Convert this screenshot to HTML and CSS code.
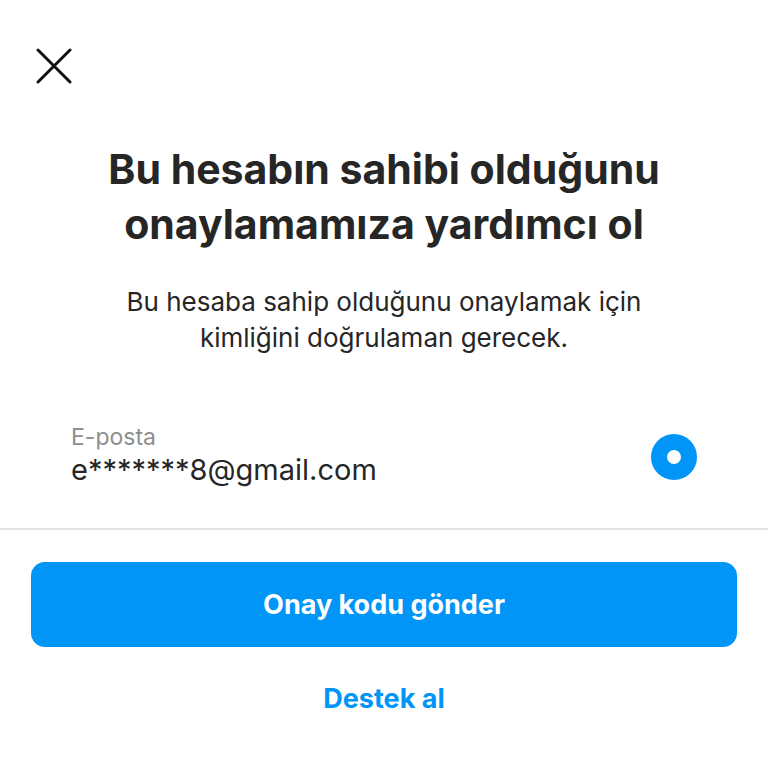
FILE: index.html
```html
<!DOCTYPE html>
<html lang="tr">
<head>
    <meta charset="UTF-8">
    <meta name="viewport" content="width=device-width, initial-scale=1.0">
    <title>Hesabını onayla</title>
    <link rel="stylesheet" href="styles.css">
</head>
<body>
    <div class="screen">
        <div class="topbar">
            <button class="close" aria-label="Kapat">
                <svg width="36" height="36" viewBox="0 0 36 36">
                    <path d="M2 2 L34 34 M34 2 L2 34" stroke="#111" stroke-width="3" stroke-linecap="round" fill="none"/>
                </svg>
            </button>
        </div>

        <h1 class="title">Bu hesabın sahibi olduğunu onaylamamıza yardımcı ol</h1>
        <p class="subtitle">Bu hesaba sahip olduğunu onaylamak için kimliğini doğrulaman gerecek.</p>

        <div class="option">
            <div class="option-text">
                <div class="option-label">E-posta</div>
                <div class="option-value">e*******8@gmail.com</div>
            </div>
            <span class="radio"></span>
        </div>

        <div class="actions">
            <button class="primary">Onay kodu gönder</button>
            <button class="link">Destek al</button>
        </div>
    </div>
</body>
</html>
```

FILE: styles.css
```css
body {
    margin: 0;
    background: #fff;
    font-family: Inter, "Noto Sans", Arial, sans-serif;
    color: #262626;
}
.screen {
    width: 768px;
    min-height: 768px;
}
.topbar {
    padding: 48px 0 0 36px;
    height: 36px;
}
.close {
    border: none;
    background: none;
    padding: 0;
    width: 36px;
    height: 36px;
    cursor: pointer;
}
.title {
    margin: 58px auto 0;
    width: 620px;
    text-align: center;
    font-size: 41px;
    line-height: 55px;
    font-weight: 700;
    color: #262626;
}
.subtitle {
    margin: 32px auto 0;
    width: 560px;
    text-align: center;
    font-size: 26px;
    line-height: 36px;
    font-weight: 400;
}
.option {
    display: flex;
    align-items: center;
    justify-content: space-between;
    margin-top: 68px;
    padding: 0 71px 38px 71px;
    border-bottom: 2px solid #e3e3e3;
}
.option-label {
    font-size: 23px;
    line-height: 26px;
    color: #8e8e8e;
}
.option-value {
    font-size: 29px;
    line-height: 40px;
}
.radio {
    width: 14px;
    height: 14px;
    border-radius: 50%;
    border: 16px solid #0095f6;
    background: #fff;
    flex: none;
}
.actions {
    display: flex;
    flex-direction: column;
    align-items: center;
    padding: 32px 31px 0;
}
.primary {
    width: 100%;
    height: 85px;
    border: none;
    border-radius: 14px;
    background: #0095f6;
    color: #fff;
    font-family: inherit;
    font-size: 27px;
    font-weight: 700;
    cursor: pointer;
}
.link {
    margin-top: 34px;
    border: none;
    background: none;
    color: #0095f6;
    font-family: inherit;
    font-size: 27px;
    font-weight: 700;
    cursor: pointer;
}
```
